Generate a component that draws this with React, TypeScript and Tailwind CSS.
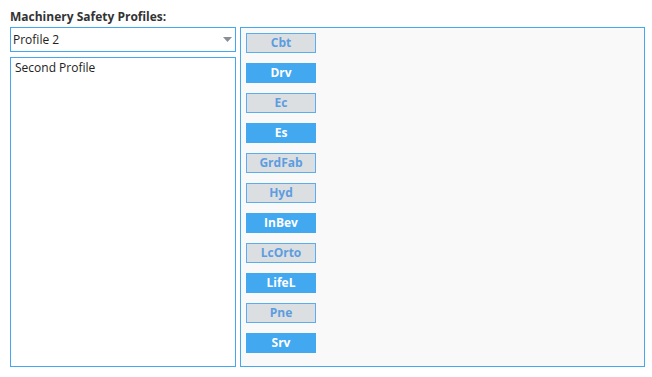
import React from 'react'

const profiles = [
  { name: 'Cbt', on: false },
  { name: 'Drv', on: true },
  { name: 'Ec', on: false },
  { name: 'Es', on: true },
  { name: 'GrdFab', on: false },
  { name: 'Hyd', on: false },
  { name: 'InBev', on: true },
  { name: 'LcOrto', on: false },
  { name: 'LifeL', on: true },
  { name: 'Pne', on: false },
  { name: 'Srv', on: true },
]

export default function App() {
  return (
    <div
      className="w-[652px] h-[377px] bg-white pl-[10px] pt-[8px] text-[12px] text-[#222]"
      style={{ fontFamily: '"Open Sans", "Noto Sans", sans-serif' }}
    >
      <div className="font-bold text-[#333] leading-[17px] h-[19px]">Machinery Safety Profiles:</div>
      <div className="flex gap-[4px]">
        <div className="w-[226px] shrink-0 flex flex-col gap-[5px]">
          <div className="h-[25px] border border-[#42a8f0] flex items-center justify-between pl-[2px] pr-[3px]">
            <span className="text-[12px]">Profile 2</span>
            <svg width="9" height="6" viewBox="0 0 9 6">
              <path d="M0 0 L9 0 L4.5 5 Z" fill="#8a8f96" />
            </svg>
          </div>
          <div className="h-[310px] border border-[#42a8f0] px-[4px] pt-[1px]">
            <div className="leading-[17px]">Second Profile</div>
          </div>
        </div>
        <div className="w-[405px] shrink-0 h-[340px] border border-[#42a8f0] bg-[#f9f9f9] pl-[5px] pt-[5px] flex flex-col gap-[10px]">
          {profiles.map((p) => (
            <div
              key={p.name}
              className={
                p.on
                  ? 'w-[70px] h-[20px] bg-[#42a8f0] text-white font-bold flex items-center justify-center'
                  : 'w-[70px] h-[20px] bg-[#dcdfe2] border border-[#5aaef0] text-[#5c9de0] font-bold flex items-center justify-center'
              }
            >
              {p.name}
            </div>
          ))}
        </div>
      </div>
    </div>
  )
}
